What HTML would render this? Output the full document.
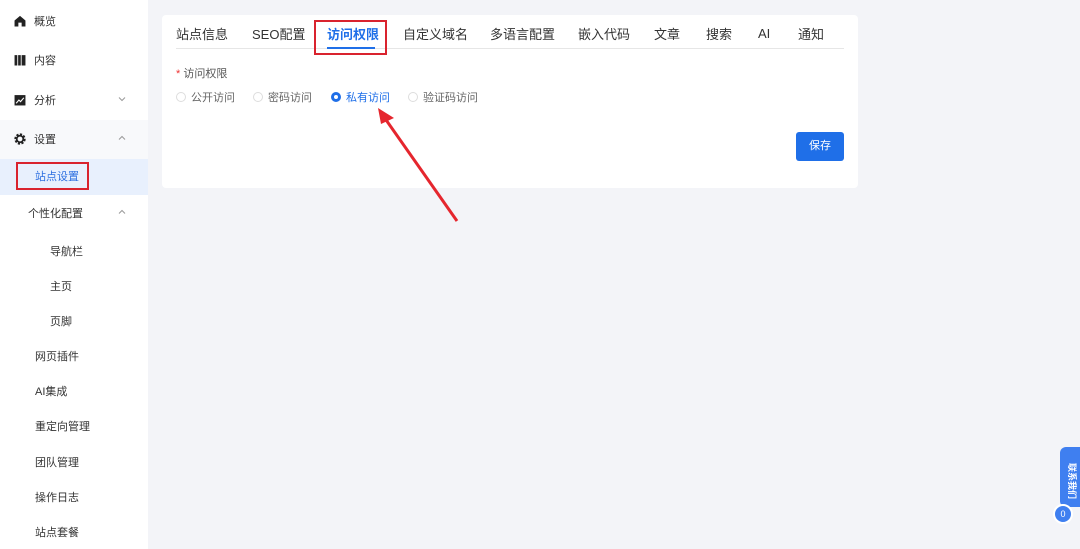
<!DOCTYPE html>
<html><head><meta charset="utf-8"><style>
*{margin:0;padding:0;box-sizing:border-box}
body{width:1080px;height:549px;overflow:hidden;background:#f3f4f8;font-family:"Liberation Sans","Noto Sans CJK SC",sans-serif;position:relative;color:#333}
.side{position:absolute;left:0;top:0;width:148px;height:549px;background:#fff}
.it{position:absolute;left:0;width:148px;font-size:11px;color:#333;height:14px}
.ic{position:absolute;left:14px;top:0;width:12px;height:12px}
.t{position:absolute;top:-2px}
.chev{position:absolute;left:118px;top:2px;width:8px;height:6px}
.card{position:absolute;left:162px;top:15px;width:696px;height:173px;background:#fff;border-radius:4px}
.tab{position:absolute;top:9px;font-size:13px;color:#333}
.radio{position:absolute;top:74px;font-size:11px;color:#666}
.radio i{position:absolute;left:-15px;top:3px;width:10px;height:10px;border:1px solid #ddd;border-radius:50%}
</style></head><body>
<div class="side">
 <div class="it" style="top:15px"><svg class="ic" viewBox="0 0 11 11"><path d="M0.5 5L5.5 0.8L10.5 5V10.5H7V7H4V10.5H0.5Z" fill="#222"/></svg><span class="t" style="left:34px">概览</span></div>
 <div class="it" style="top:54px"><svg class="ic" viewBox="0 0 11 11"><path d="M0.5 1H3V10.5H0.5ZM3.8 1H6.2V10.5H3.8ZM7 1H10.5V10.5H7Z" fill="#222"/></svg><span class="t" style="left:34px">内容</span></div>
 <div class="it" style="top:94px"><svg class="ic" viewBox="0 0 11 11"><rect x="0.5" y="1" width="10" height="9.5" fill="#222"/><path d="M2 8.5L4.5 5.5L6 7L9 3.5" stroke="#fff" fill="none"/></svg><span class="t" style="left:34px">分析</span><svg class="chev" viewBox="0 0 8 6"><path d="M1 1.5L4 4.5L7 1.5" stroke="#999" fill="none"/></svg></div>
 <div style="position:absolute;top:120px;left:0;width:148px;height:39px;background:#f8f9fb"></div>
 <div class="it" style="top:133px"><svg class="ic" viewBox="0 0 11 11"><circle cx="5.5" cy="5.5" r="4" fill="none" stroke="#222" stroke-width="2.4" stroke-dasharray="1.9 1.2"/><circle cx="5.5" cy="5.5" r="3" fill="none" stroke="#222" stroke-width="1.6"/></svg><span class="t" style="left:34px">设置</span><svg class="chev" viewBox="0 0 8 6"><path d="M1 4.5L4 1.5L7 4.5" stroke="#999" fill="none"/></svg></div>
 <div style="position:absolute;top:159px;left:0;width:148px;height:36px;background:#e8f0fd"></div>
 <div style="position:absolute;left:16px;top:162px;width:73px;height:28px;border:2px solid #d9232e"></div>
 <div class="it" style="top:170px;color:#2d6fe0"><span class="t" style="left:35px">站点设置</span></div>
 <div class="it" style="top:207px"><span class="t" style="left:28px">个性化配置</span><svg class="chev" viewBox="0 0 8 6"><path d="M1 4.5L4 1.5L7 4.5" stroke="#999" fill="none"/></svg></div>
 <div class="it" style="top:245px"><span class="t" style="left:50px">导航栏</span></div>
 <div class="it" style="top:280px"><span class="t" style="left:50px">主页</span></div>
 <div class="it" style="top:315px"><span class="t" style="left:50px">页脚</span></div>
 <div class="it" style="top:350px"><span class="t" style="left:35px">网页插件</span></div>
 <div class="it" style="top:385px"><span class="t" style="left:35px">AI集成</span></div>
 <div class="it" style="top:420px"><span class="t" style="left:35px">重定向管理</span></div>
 <div class="it" style="top:456px"><span class="t" style="left:35px">团队管理</span></div>
 <div class="it" style="top:491px"><span class="t" style="left:35px">操作日志</span></div>
 <div class="it" style="top:526px"><span class="t" style="left:35px">站点套餐</span></div>
</div>
<div class="card">
 <span class="tab" style="left:14px">站点信息</span>
 <span class="tab" style="left:90px">SEO配置</span>
 <span class="tab" style="left:165px;color:#1f6fe8;font-weight:bold">访问权限</span>
 <div style="position:absolute;left:14px;top:33px;width:668px;height:1px;background:#e6e6e6"></div>
 <div style="position:absolute;left:165px;top:32px;width:48px;height:2px;background:#1f6fe8;z-index:2"></div>
 <div style="position:absolute;left:152px;top:5px;width:73px;height:35px;border:2px solid #d9232e"></div>
 <span class="tab" style="left:241px">自定义域名</span>
 <span class="tab" style="left:328px">多语言配置</span>
 <span class="tab" style="left:416px">嵌入代码</span>
 <span class="tab" style="left:492px">文章</span>
 <span class="tab" style="left:544px">搜索</span>
 <span class="tab" style="left:596px;top:11px">AI</span>
 <span class="tab" style="left:636px">通知</span>
 <div style="position:absolute;left:14px;top:50px;font-size:11px;color:#555"><span style="color:#e33">*</span> 访问权限</div>
 <span class="radio" style="left:29px"><i></i>公开访问</span>
 <span class="radio" style="left:106px"><i></i>密码访问</span>
 <span class="radio" style="left:184px;color:#1f6fe8"><i style="border:3px solid #1f6fe8"></i>私有访问</span>
 <span class="radio" style="left:261px"><i></i>验证码访问</span>
 <div style="position:absolute;left:634px;top:117px;width:48px;height:29px;background:#1f6fe8;border-radius:3px;color:#fff;font-size:11px;text-align:center;line-height:29px">保存</div>
</div>
<svg style="position:absolute;left:0;top:0" width="1080" height="549"><line x1="457" y1="221" x2="384" y2="117" stroke="#e5262e" stroke-width="3"/><path d="M378 108L394 118L381 124Z" fill="#e5262e"/></svg>
<div style="position:absolute;left:1060px;top:447px;width:22px;height:60px;background:#3f7ff0;border-radius:6px 0 0 6px;color:#fff;font-size:9px;font-weight:bold;writing-mode:vertical-rl;text-orientation:sideways;text-align:center;line-height:20px;padding-top:8px">联系我们</div>
<div style="position:absolute;left:1053px;top:504px;width:20px;height:20px;background:#3f7ff0;border-radius:50%;border:2px solid #fff;color:#fff;font-size:9px;text-align:center;line-height:16px">0</div>
</body></html>
